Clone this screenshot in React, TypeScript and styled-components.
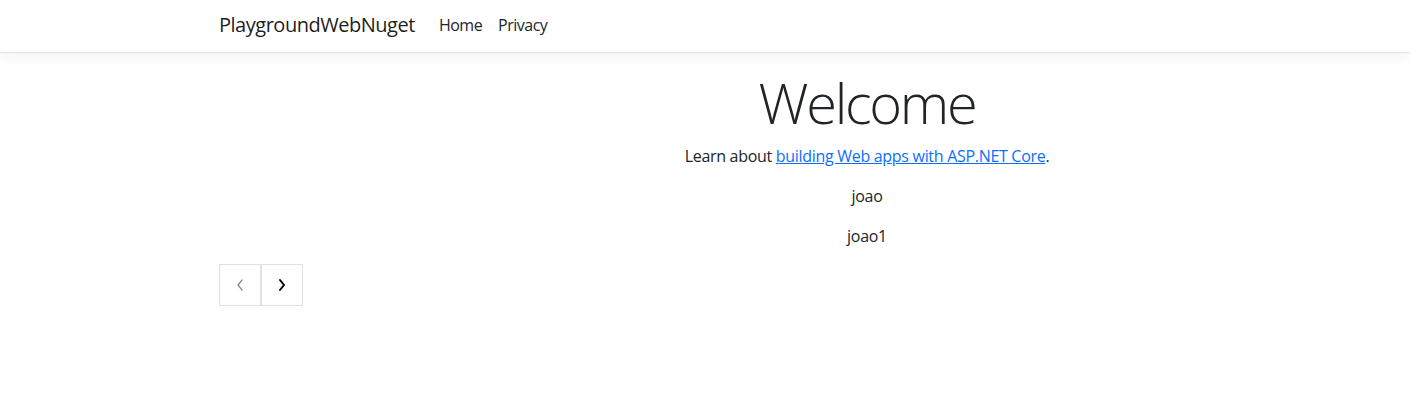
import React from "react";
import styled, { createGlobalStyle } from "styled-components";

const Global = createGlobalStyle`
  html, body { margin: 0; padding: 0; background: #fff; overflow: hidden; }
  body {
    font-family: "Open Sans", "Noto Sans", "Liberation Sans", sans-serif;
    font-size: 16px;
    line-height: 1.5;
    color: #212529;
  }
  * { box-sizing: border-box; }
`;

const Page = styled.div`
  width: 1410px;
  overflow: hidden;
`;

const Navbar = styled.header`
  height: 53px;
  background: #fff;
  border-bottom: 1px solid #e5e5e5;
  box-shadow: 0 0.25rem 0.75rem rgba(0, 0, 0, 0.05);
  position: relative;
  z-index: 1;
`;

const Container = styled.div`
  margin-left: 207px;
  width: 1320px;
  padding: 0 12px;
`;

const NavInner = styled(Container)`
  height: 52px;
  padding-bottom: 2px;
  display: flex;
  align-items: center;
`;

const Brand = styled.a`
  font-size: 20px;
  letter-spacing: -0.48px;
  color: rgba(0, 0, 0, 0.9);
  text-decoration: none;
  margin-right: 16px;
  line-height: 30px;
`;

const NavList = styled.nav`
  display: flex;
`;

const NavLink = styled.a`
  font-size: 16px;
  color: #212529;
  text-decoration: none;
  padding: 8px 8px;
  letter-spacing: -0.5px;
`;

const Main = styled(Container)`
  padding-top: 16px;
`;

const Center = styled.div`
  text-align: center;
`;

const Title = styled.h1`
  font-size: 56px;
  font-weight: 300;
  line-height: 1.2;
  margin: 0 0 8px;
  letter-spacing: -2.3px;
`;

const Para = styled.p`
  margin: 0 0 16px;
  letter-spacing: -0.3px;
`;

const Link = styled.a`
  color: #0d6efd;
  text-decoration: underline;
`;

const Pager = styled.div`
  display: flex;
`;

const PageBtn = styled.button<{ $disabled?: boolean }>`
  width: 42px;
  height: 42px;
  border: 1px solid #dee2e6;
  background: #fff;
  color: ${(p) => (p.$disabled ? "#8a8f94" : "#000")};
  display: flex;
  align-items: center;
  justify-content: center;
  padding: 0;
`;

const Chevron = ({ dir }: { dir: "left" | "right" }) => (
  <svg width="10" height="14" viewBox="0 0 10 14" fill="none">
    <path
      d={dir === "left" ? "M7 2 L3 7 L7 12" : "M3 2 L7 7 L3 12"}
      stroke="currentColor"
      strokeWidth={dir === "left" ? 1.4 : 2}
      strokeLinecap="round"
      strokeLinejoin="round"
    />
  </svg>
);

export default function App() {
  return (
    <Page>
      <Global />
      <Navbar>
        <NavInner>
          <Brand href="#">PlaygroundWebNuget</Brand>
          <NavList>
            <NavLink href="#">Home</NavLink>
            <NavLink href="#">Privacy</NavLink>
          </NavList>
        </NavInner>
      </Navbar>
      <Main>
        <Center>
          <Title>Welcome</Title>
          <Para>
            Learn about <Link href="#">building Web apps with ASP.NET Core</Link>.
          </Para>
          <Para>joao</Para>
          <Para>joao1</Para>
        </Center>
        <Pager>
          <PageBtn $disabled aria-label="Previous">
            <Chevron dir="left" />
          </PageBtn>
          <PageBtn aria-label="Next">
            <Chevron dir="right" />
          </PageBtn>
        </Pager>
      </Main>
    </Page>
  );
}
